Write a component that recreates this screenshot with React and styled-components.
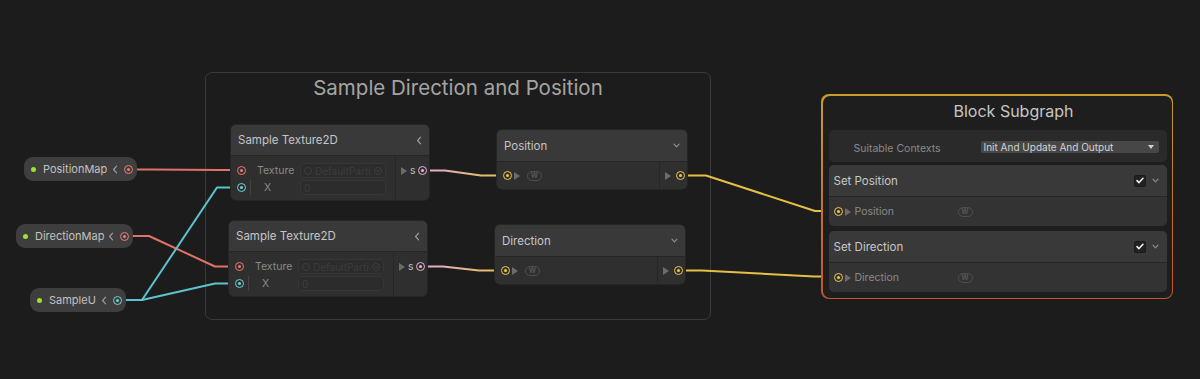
import React from 'react';
import styled, { createGlobalStyle } from 'styled-components';

const GlobalStyle = createGlobalStyle`
  html, body { margin: 0; padding: 0; background: #1c1c1c; }
  body { font-family: Inter, "Noto Sans", "Liberation Sans", sans-serif; }
`;

const Canvas = styled.div`
  position: relative;
  width: 1200px;
  height: 379px;
  overflow: hidden;
  background: #1c1c1c;
`;

const Wires = styled.svg`
  position: absolute;
  left: 0;
  top: 0;
  width: 1200px;
  height: 379px;
  z-index: 1;
  pointer-events: none;
`;

const Wire = styled.path`
  fill: none;
  stroke-width: 2;
  stroke-linejoin: round;
  stroke-linecap: round;
`;

const Group = styled.div`
  position: absolute;
  left: 205px;
  top: 72px;
  width: 506px;
  height: 248px;
  box-sizing: border-box;
  border: 1.5px solid #3a3a3a;
  border-radius: 7px;
  display: flex;
  justify-content: center;
  z-index: 0;
`;

const GroupTitle = styled.div`
  margin-top: 3px;
  font-size: 20.5px;
  line-height: 24px;
  color: #a4a4a4;
  white-space: nowrap;
`;

const Port = styled.span`
  flex: none;
  box-sizing: border-box;
  width: 9px;
  height: 9px;
  border-radius: 50%;
  border: 1.5px solid ${(p) => p.$c};
  display: inline-flex;
  align-items: center;
  justify-content: center;
  margin-left: ${(p) => (p.$end ? 'auto' : '0')};
  &::after {
    content: '';
    width: 3px;
    height: 3px;
    border-radius: 50%;
    background: ${(p) => p.$c};
  }
`;

const Param = styled.div`
  position: absolute;
  left: ${(p) => p.$x}px;
  top: ${(p) => p.$y}px;
  width: ${(p) => p.$w}px;
  height: 24px;
  box-sizing: border-box;
  padding: 0 4px 0 7px;
  display: flex;
  align-items: center;
  background: #3e3e3e;
  border-radius: 9px;
  z-index: 2;
`;

const ParamDot = styled.span`
  flex: none;
  width: 5px;
  height: 5px;
  border-radius: 50%;
  background: #9be22d;
  margin-right: 7px;
`;

const ParamName = styled.span`
  font-size: 11px;
  color: #c2c2c2;
  white-space: nowrap;
`;

const IconSvg = styled.svg`
  flex: none;
  display: block;
  margin-left: ${(p) => p.$ml || '0'};
  margin-right: ${(p) => p.$mr || '0'};
`;

const ChevronLeft = ({ ml, mr }) => (
  <IconSvg $ml={ml} $mr={mr} width="6" height="9" viewBox="0 0 6 9">
    <path d="M4.6 1.2 L1.6 4.5 L4.6 7.8" fill="none" stroke="#9c9c9c" strokeWidth="1.2" strokeLinecap="round" strokeLinejoin="round" />
  </IconSvg>
);

const ChevronDown = ({ ml, mr }) => (
  <IconSvg $ml={ml} $mr={mr} width="7" height="5" viewBox="0 0 7 5">
    <path d="M1 1.2 L3.5 3.8 L6 1.2" fill="none" stroke="#8e8e8e" strokeWidth="1.2" strokeLinecap="round" strokeLinejoin="round" />
  </IconSvg>
);

const Tri = ({ ml, mr }) => (
  <IconSvg $ml={ml} $mr={mr} width="6" height="8" viewBox="0 0 6 8">
    <path d="M0 0 L6 4 L0 8 Z" fill="#6c6c6c" />
  </IconSvg>
);

const Node = styled.div`
  position: absolute;
  left: ${(p) => p.$x}px;
  top: ${(p) => p.$y}px;
  width: ${(p) => p.$w}px;
  z-index: 2;
  background: #2f2f2f;
  border-radius: 5px;
  overflow: hidden;
  box-shadow: 0 0 0 1px #252525;
`;

const NodeHeader = styled.div`
  box-sizing: border-box;
  height: ${(p) => p.$h}px;
  display: flex;
  align-items: center;
  justify-content: space-between;
  padding: 0 7px;
  background: #393939;
  border-bottom: 1px solid #262626;
  font-size: 11.5px;
  color: #c6c6c6;
  white-space: nowrap;
`;

const NodeBody = styled.div`
  display: flex;
  height: ${(p) => (p.$h ? `${p.$h}px` : 'auto')};
`;

const Inputs = styled.div`
  flex: 1;
  display: flex;
  flex-direction: column;
  justify-content: ${(p) => (p.$center ? 'center' : 'flex-start')};
  padding: ${(p) => (p.$center ? '0 0 0 6px' : '6px 0 4px 6px')};
`;

const Outputs = styled.div`
  flex: none;
  box-sizing: border-box;
  width: ${(p) => p.$w}px;
  border-left: 1px solid #262626;
  display: flex;
  flex-direction: column;
  justify-content: ${(p) => (p.$center ? 'center' : 'flex-start')};
  padding: ${(p) => (p.$center ? '0 2px 0 5px' : '6px 2px 0 5px')};
`;

const Row = styled.div`
  height: 17px;
  display: flex;
  align-items: center;
`;

const SlotLabel = styled.span`
  flex: none;
  width: ${(p) => p.$w}px;
  margin-left: ${(p) => p.$ml}px;
  font-size: 10.5px;
  color: #8a8a8a;
  white-space: nowrap;
`;

const OutName = styled.span`
  font-size: 10.5px;
  color: #bdbdbd;
  margin-left: 3px;
`;

const LinkBar = styled.span`
  flex: none;
  width: 1px;
  height: 15px;
  margin-left: 4px;
  background: #444;
`;

const Field = styled.div`
  flex: none;
  box-sizing: border-box;
  width: 86px;
  height: 15px;
  border: 1px solid #363636;
  border-radius: 3px;
  background: #2c2c2c;
  display: flex;
  align-items: center;
  padding: 0 3px;
  gap: 3px;
  font-size: 10px;
  color: #3c3c3c;
  white-space: nowrap;
`;

const FieldText = styled.span`
  flex: 1;
`;

const RingIcon = styled.span`
  flex: none;
  box-sizing: border-box;
  width: 8px;
  height: 8px;
  border-radius: 50%;
  border: 1px solid #3d3d3d;
  display: inline-flex;
  align-items: center;
  justify-content: center;
  &::after {
    content: '';
    width: ${(p) => (p.$dot ? '2px' : '0')};
    height: ${(p) => (p.$dot ? '2px' : '0')};
    border-radius: 50%;
    background: #3d3d3d;
  }
`;

const WPill = styled.span`
  flex: none;
  box-sizing: border-box;
  width: 15px;
  height: 10px;
  margin-left: ${(p) => p.$ml || 0}px;
  border: 1px solid #4e4e4e;
  border-radius: 5px;
  display: inline-flex;
  align-items: center;
  justify-content: center;
  font-size: 7px;
  font-weight: 700;
  color: #565656;
  line-height: 1;
`;

const Context = styled.div`
  position: absolute;
  left: 821px;
  top: 94px;
  width: 352px;
  height: 205px;
  box-sizing: border-box;
  padding: 1.5px;
  border-radius: 8px;
  z-index: 2;
  background: linear-gradient(180deg, #c99b2e 0%, #c37b2c 45%, #c4552c 100%);
`;

const ContextInner = styled.div`
  height: 100%;
  box-sizing: border-box;
  border-radius: 7px;
  background: #1e1e1e;
  padding: 0 5px 5px 6px;
  display: flex;
  flex-direction: column;
`;

const ContextTitle = styled.div`
  height: 34.5px;
  box-sizing: border-box;
  padding: 0 0 3px 32px;
  display: flex;
  align-items: center;
  justify-content: center;
  font-size: 16px;
  color: #c6c6c6;
  white-space: nowrap;
`;

const Settings = styled.div`
  height: 32px;
  flex: none;
  box-sizing: border-box;
  border-radius: 5px;
  background: #2a2a2a;
  display: flex;
  align-items: center;
  padding: 2px 8px 0 25px;
`;

const SettingLabel = styled.span`
  font-size: 10.5px;
  color: #8b8b8b;
  white-space: nowrap;
  margin-top: 2px;
`;

const Dropdown = styled.div`
  margin-left: auto;
  width: 178px;
  height: 12px;
  box-sizing: border-box;
  background: #474747;
  border-radius: 2px;
  display: flex;
  align-items: center;
  justify-content: space-between;
  padding: 0 5px 0 3px;
  font-size: 10px;
  color: #d4d4d4;
  white-space: nowrap;
`;

const DropArrow = styled.span`
  width: 0;
  height: 0;
  border-left: 3.5px solid transparent;
  border-right: 3.5px solid transparent;
  border-top: 4px solid #d0d0d0;
`;

const Block = styled.div`
  flex: none;
  margin-top: ${(p) => p.$mt}px;
  border-radius: 5px;
  background: #333333;
  overflow: hidden;
`;

const BlockHeader = styled.div`
  height: 32px;
  box-sizing: border-box;
  display: flex;
  align-items: center;
  padding: 0 8px 0 5px;
  background: #393939;
  border-bottom: 1px solid #272727;
  font-size: 11.5px;
  color: #c8c8c8;
  white-space: nowrap;
`;

const Checkbox = styled.span`
  margin-left: auto;
  margin-right: 6px;
  width: 12px;
  height: 12px;
  box-sizing: border-box;
  border-radius: 2px;
  background: #222222;
  border: 1px solid #1b1b1b;
  display: inline-flex;
  align-items: center;
  justify-content: center;
`;

const BlockRow = styled.div`
  height: 29px;
  display: flex;
  align-items: center;
  padding-left: 5px;
`;

const PORT = {
  red: '#ef7a74',
  teal: '#6fd2da',
  pink: '#e8b2dc',
  yellow: '#f0c64a',
};

const params = [
  { name: 'PositionMap', x: 24, y: 157, w: 113, c: PORT.red },
  { name: 'DirectionMap', x: 16, y: 224, w: 117, c: PORT.red },
  { name: 'SampleU', x: 30, y: 288, w: 96, c: PORT.teal },
];

function SampleNode({ x, y }) {
  return (
    <Node $x={x} $y={y} $w={198}>
      <NodeHeader $h={31}>
        Sample Texture2D
        <ChevronLeft />
      </NodeHeader>
      <NodeBody>
        <Inputs>
          <Row>
            <Port $c={PORT.red} />
            <SlotLabel $ml={11} $w={43}>Texture</SlotLabel>
            <Field>
              <RingIcon />
              <FieldText>DefaultParti</FieldText>
              <RingIcon $dot />
            </Field>
          </Row>
          <Row>
            <Port $c={PORT.teal} />
            <LinkBar />
            <SlotLabel $ml={13} $w={36}>X</SlotLabel>
            <Field>
              <FieldText>0</FieldText>
            </Field>
          </Row>
        </Inputs>
        <Outputs $w={34}>
          <Row>
            <Tri />
            <OutName>s</OutName>
            <Port $c={PORT.pink} $end />
          </Row>
        </Outputs>
      </NodeBody>
    </Node>
  );
}

function VectorNode({ x, y, title }) {
  return (
    <Node $x={x} $y={y} $w={190}>
      <NodeHeader $h={32}>
        {title}
        <ChevronDown />
      </NodeHeader>
      <NodeBody $h={27}>
        <Inputs $center>
          <Row>
            <Port $c={PORT.yellow} />
            <Tri ml="2px" />
            <WPill $ml={7}>W</WPill>
          </Row>
        </Inputs>
        <Outputs $w={28} $center>
          <Row>
            <Tri />
            <Port $c={PORT.yellow} $end />
          </Row>
        </Outputs>
      </NodeBody>
    </Node>
  );
}

function SetBlock({ title, slot, mt }) {
  return (
    <Block $mt={mt}>
      <BlockHeader>
        {title}
        <Checkbox>
          <svg width="8" height="7" viewBox="0 0 8 7">
            <path d="M1 3.6 L3 5.6 L7 1.2" fill="none" stroke="#f2f2f2" strokeWidth="1.5" strokeLinecap="round" strokeLinejoin="round" />
          </svg>
        </Checkbox>
        <ChevronDown />
      </BlockHeader>
      <BlockRow>
        <Port $c={PORT.yellow} />
        <Tri ml="2px" />
        <SlotLabel $ml={4} $w={103}>{slot}</SlotLabel>
        <WPill>W</WPill>
      </BlockRow>
    </Block>
  );
}

export default function App() {
  return (
    <>
      <GlobalStyle />
      <Canvas>
        <Group>
          <GroupTitle>Sample Direction and Position</GroupTitle>
        </Group>

        <Wires viewBox="0 0 1200 379">
          <defs>
            <linearGradient id="pk1" gradientUnits="userSpaceOnUse" x1="423" y1="0" x2="507" y2="0">
              <stop offset="0" stopColor="#e6abd6" />
              <stop offset="1" stopColor="#e8c24a" />
            </linearGradient>
            <linearGradient id="pk2" gradientUnits="userSpaceOnUse" x1="421" y1="0" x2="505" y2="0">
              <stop offset="0" stopColor="#e6abd6" />
              <stop offset="1" stopColor="#e8c24a" />
            </linearGradient>
          </defs>
          <Wire d="M128 169.5 L150 169.5 L220 170 L241 170" stroke="#e0716b" />
          <Wire d="M125 236 L149 236 L215 266.5 L240 266.5" stroke="#e0716b" />
          <Wire d="M118 300 L142 300 L217 187.5 L241 187.5" stroke="#5ec4cc" />
          <Wire d="M118 300 L142 300 L215 283.5 L240 283.5" stroke="#5ec4cc" />
          <Wire d="M423 170.5 L445 170.5 L481 175.5 L507 175.5" stroke="url(#pk1)" />
          <Wire d="M421 266.5 L443 266.5 L479 270.5 L505 270.5" stroke="url(#pk2)" />
          <Wire d="M680 175.5 L706 175.5 L815 211 L838 211" stroke="#e6c045" />
          <Wire d="M678 270.5 L702 270.5 L814 276.5 L838 276.5" stroke="#e6c045" />
        </Wires>

        {params.map((p) => (
          <Param key={p.name} $x={p.x} $y={p.y} $w={p.w}>
            <ParamDot />
            <ParamName>{p.name}</ParamName>
            <ChevronLeft ml="auto" mr="6px" />
            <Port $c={p.c} />
          </Param>
        ))}

        <SampleNode x={231} y={125} />
        <SampleNode x={229} y={221} />

        <VectorNode x={497} y={130} title="Position" />
        <VectorNode x={495} y={225} title="Direction" />

        <Context>
          <ContextInner>
            <ContextTitle>Block Subgraph</ContextTitle>
            <Settings>
              <SettingLabel>Suitable Contexts</SettingLabel>
              <Dropdown>
                Init And Update And Output
                <DropArrow />
              </Dropdown>
            </Settings>
            <SetBlock title="Set Position" slot="Position" mt={3} />
            <SetBlock title="Set Direction" slot="Direction" mt={5} />
          </ContextInner>
        </Context>
      </Canvas>
    </>
  );
}
